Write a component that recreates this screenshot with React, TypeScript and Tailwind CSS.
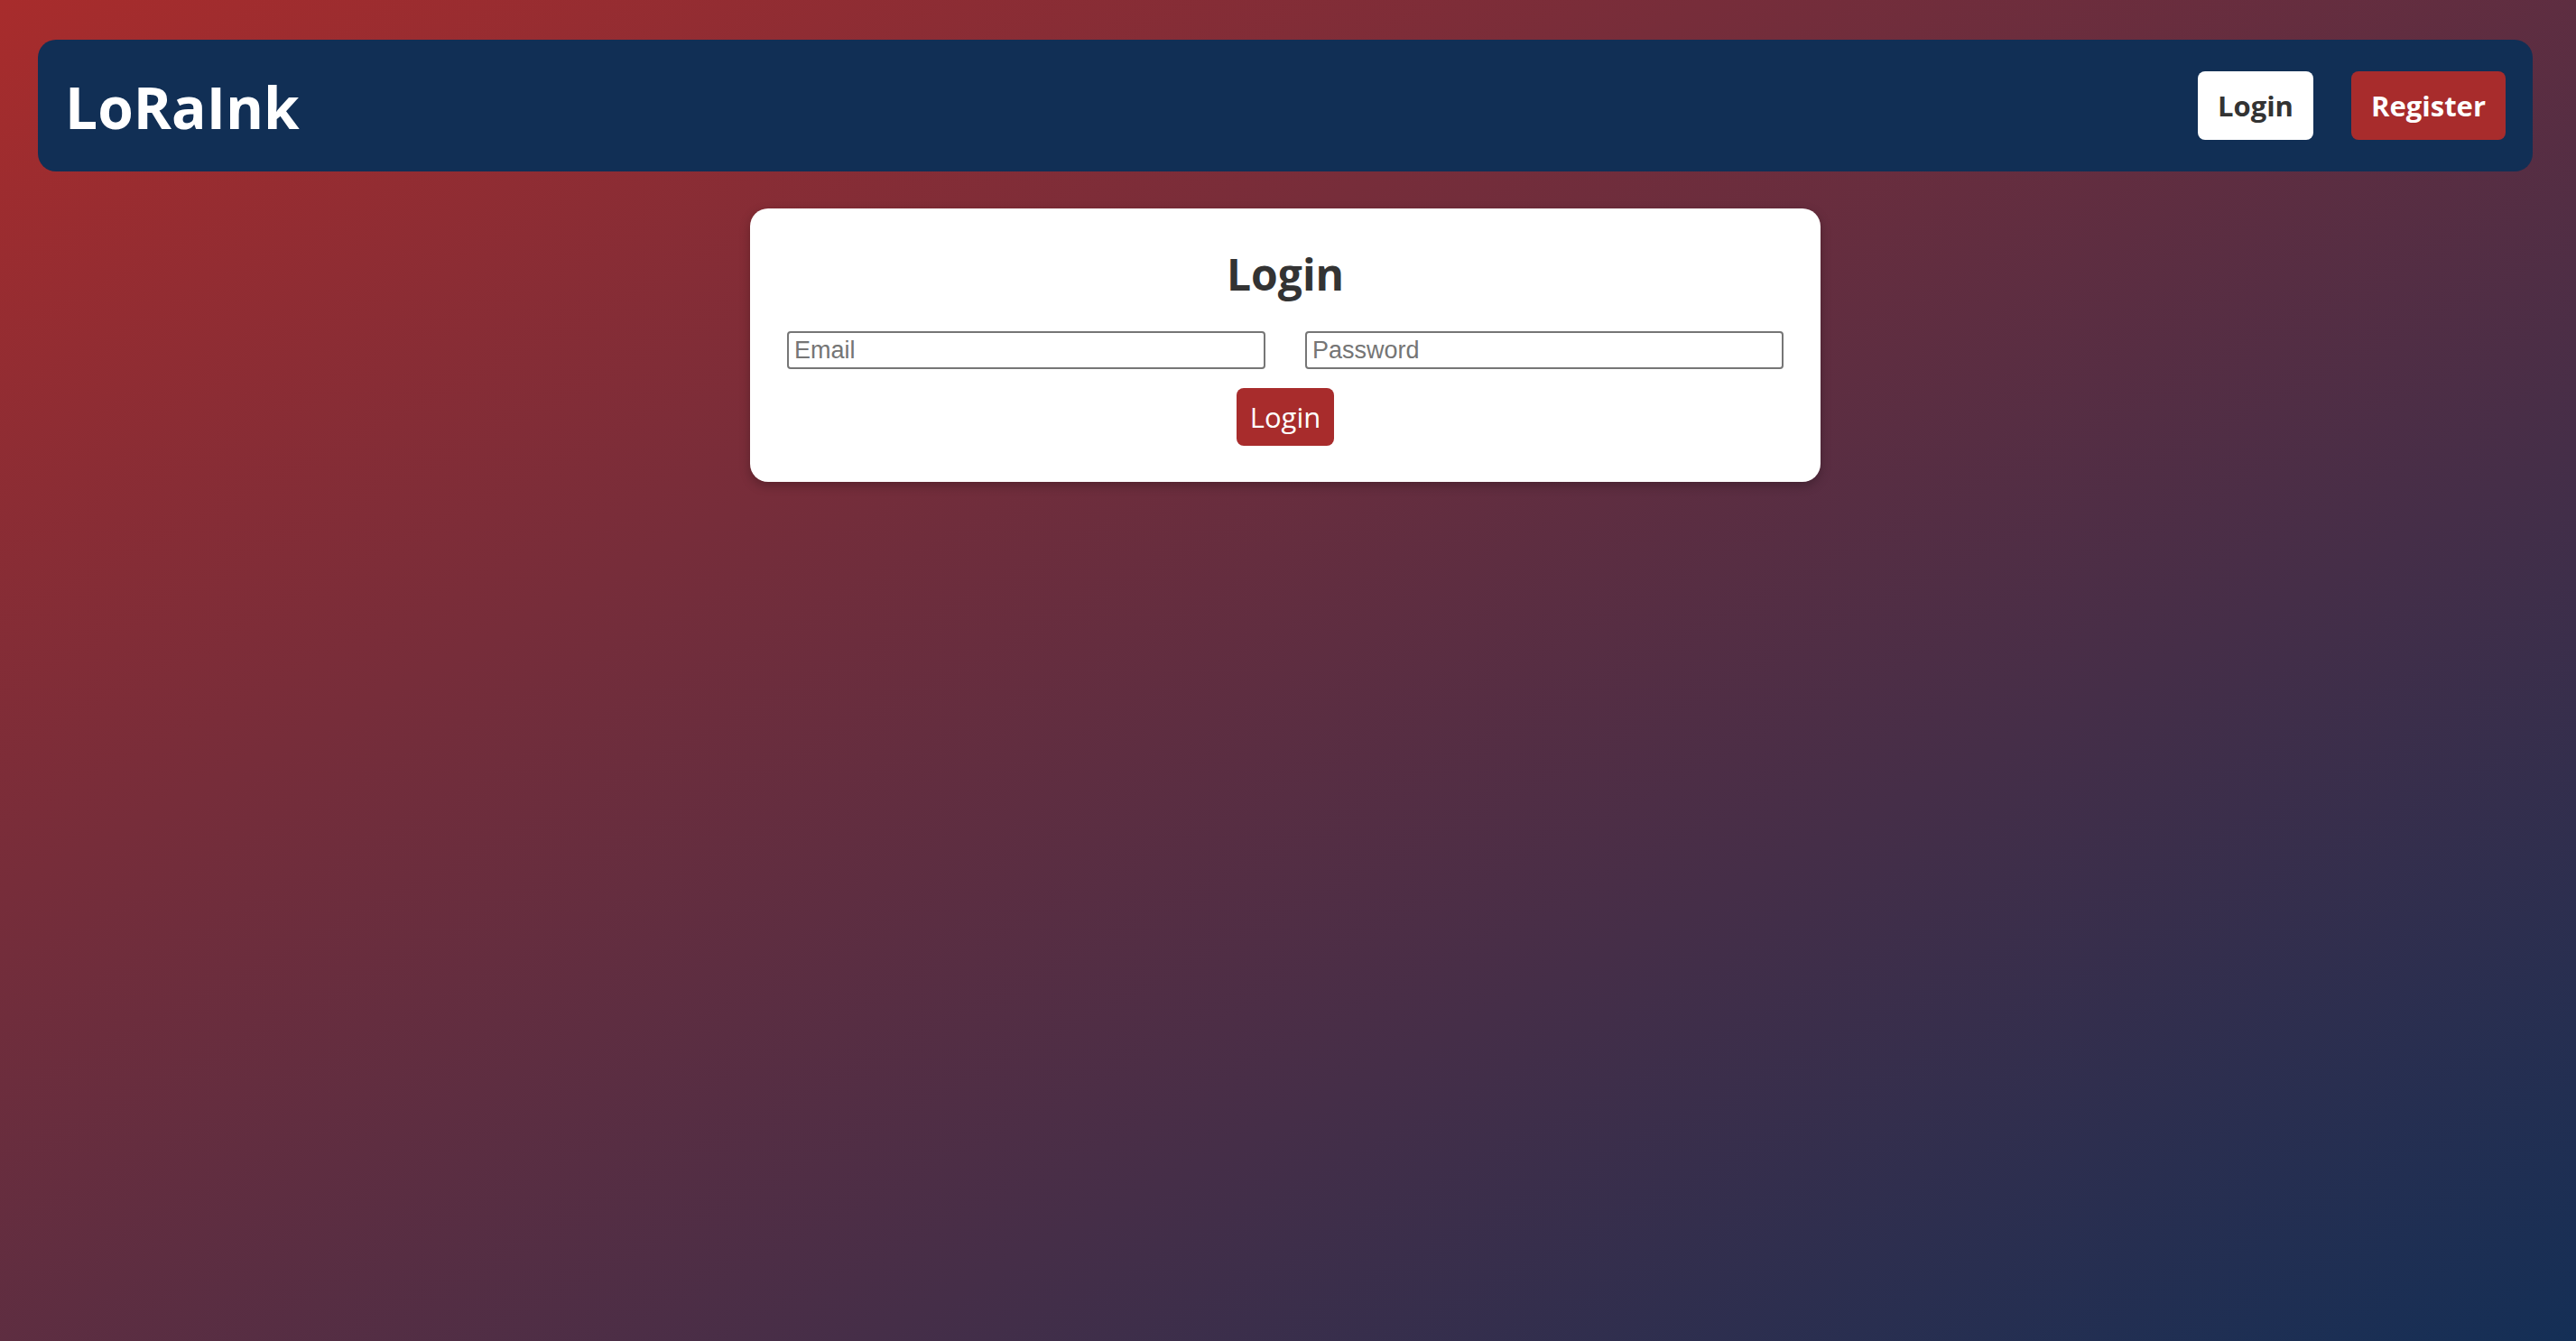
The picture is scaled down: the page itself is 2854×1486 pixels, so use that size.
import React from 'react';

const Header: React.FC = () => {
  return (
    <header className="mx-[42px] mt-[44px] h-[146px] rounded-[20px] bg-[#112f55] pl-[30px] pr-[30px] flex items-center justify-between">
      <h1 className="text-[64px] leading-none font-bold text-white tracking-normal pt-[4px]">LoRaInk</h1>
      <nav className="flex items-center gap-[42px]">
        <button className="h-[76px] px-[22px] rounded-[8px] bg-white text-[#333333] text-[31px] font-bold">
          Login
        </button>
        <button className="h-[76px] px-[22px] rounded-[8px] bg-[#a82c2c] text-white text-[31px] font-bold">
          Register
        </button>
      </nav>
    </header>
  );
};

const LoginCard: React.FC = () => {
  return (
    <div className="mx-auto mt-[41px] w-[1186px] rounded-[20px] bg-white px-[41px] pt-[40px] pb-[40px] shadow-[0_4px_12px_rgba(0,0,0,0.25)] flex flex-col items-center">
      <h2 className="text-[48px] font-bold text-[#333333] leading-[1.36]">Login</h2>
      <form className="w-full flex flex-col items-center mt-[31px]" onSubmit={(e) => e.preventDefault()}>
        <div className="w-full flex gap-[44px]">
          <input
            type="email"
            placeholder="Email"
            className="flex-1 h-[42px] border-2 border-[#767676] rounded-[4px] px-[6px] text-[27px] font-['Liberation_Sans',Arial,sans-serif] placeholder:text-[#757575] outline-none"
          />
          <input
            type="password"
            placeholder="Password"
            className="flex-1 h-[42px] border-2 border-[#767676] rounded-[4px] px-[6px] text-[27px] font-['Liberation_Sans',Arial,sans-serif] placeholder:text-[#757575] outline-none"
          />
        </div>
        <button type="submit" className="mt-[21px] h-[64px] px-[15px] rounded-[8px] bg-[#a82c2c] text-white text-[31px]">
          Login
        </button>
      </form>
    </div>
  );
};

export default function App() {
  return (
    <div className="min-h-screen w-full bg-[linear-gradient(to_bottom_right,#a82c2c,#142f56)] font-['Open_Sans',sans-serif] overflow-hidden pr-[6px]">
      <Header />
      <LoginCard />
    </div>
  );
}
